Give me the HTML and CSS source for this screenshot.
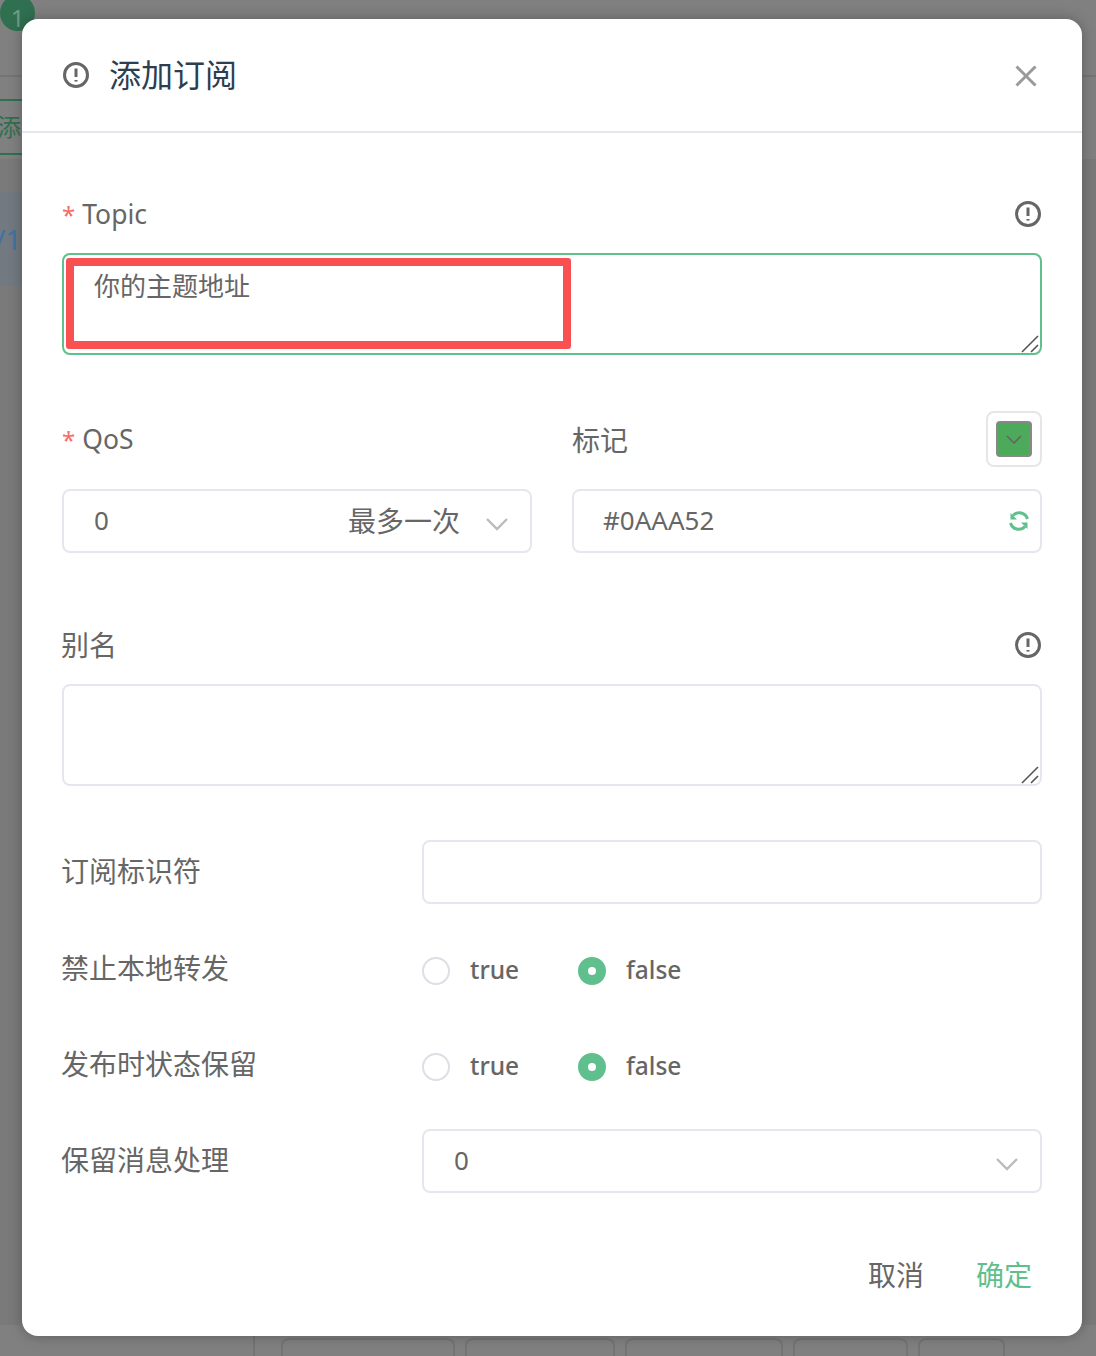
FILE: index.html
```html
<!DOCTYPE html>
<html lang="en">
<head>
    <meta charset="UTF-8">
    <title>添加订阅</title>
    <link rel="stylesheet" href="styles.css">
</head>
<body>
    <div class="page">
        <div class="badge">1</div>
        <div class="topbar"></div>
        <div class="tabrow"><span class="addtag">添加</span></div>
        <div class="tablearea">
            <div class="subrow"><span>/1</span></div>
        </div>
        <div class="pager">
            <div class="pagebox pb1"></div>
            <div class="pagebox pb2"></div>
            <div class="pagebox pb3"></div>
            <div class="pagebox pb4"></div>
            <div class="pagebox pb5"></div>
        </div>
    </div>

    <div class="dialog">
        <div class="dialog-head">
            <svg class="tip" viewBox="0 0 28 28"><circle cx="14" cy="14" r="11.5"/><path d="M14 7.5v8.5"/><path d="M14 19v1.6"/></svg>
            <span class="dialog-title">添加订阅</span>
            <svg class="close" viewBox="0 0 22 22"><path d="M1.5 1.5l19 19M20.5 1.5l-19 19"/></svg>
        </div>

        <form class="dialog-body">
            <div class="labelrow">
                <label class="latin"><i>*</i>Topic</label>
                <svg class="tip" viewBox="0 0 28 28"><circle cx="14" cy="14" r="11.5"/><path d="M14 7.5v8.5"/><path d="M14 19v1.6"/></svg>
            </div>
            <div class="areawrap">
                <textarea class="area focused">你的主题地址</textarea>
                <svg class="grip" viewBox="0 0 18 18"><path d="M1 17L17 1M10 17l7-7"/></svg>
                <div class="redmark"></div>
            </div>

            <div class="qos">
                <div>
                    <div class="labelrow tall">
                        <label class="latin"><i>*</i>QoS</label>
                    </div>
                    <div class="box">
                        <span>0</span>
                        <span class="qosname">最多一次</span>
                        <svg class="chev" viewBox="0 0 24 14"><path d="M2 2l10 10L22 2"/></svg>
                    </div>
                </div>
                <div>
                    <div class="labelrow tall">
                        <label>标记</label>
                        <div class="swatch">
                            <div class="swatch-in">
                                <svg viewBox="0 0 16 9"><path d="M1 1l7 7 7-7"/></svg>
                            </div>
                        </div>
                    </div>
                    <div class="box colorbox">
                        <span>#0AAA52</span>
                        <svg class="refresh" viewBox="0 0 22 22"><path d="M5 5.5A8.5 8.5 0 0 1 19.5 9"/><path d="M17 16.5A8.5 8.5 0 0 1 2.5 13"/><path class="head" d="M2.5 3v6.5H9zM19.5 19v-6.5H13z"/></svg>
                    </div>
                </div>
            </div>

            <div class="labelrow alias">
                <label>别名</label>
                <svg class="tip" viewBox="0 0 28 28"><circle cx="14" cy="14" r="11.5"/><path d="M14 7.5v8.5"/><path d="M14 19v1.6"/></svg>
            </div>
            <div class="areawrap">
                <textarea class="area"></textarea>
                <svg class="grip" viewBox="0 0 18 18"><path d="M1 17L17 1M10 17l7-7"/></svg>
            </div>

            <div class="row row-id">
                <label>订阅标识符</label>
                <div class="box"></div>
            </div>
            <div class="row row-nl">
                <label>禁止本地转发</label>
                <div class="radios">
                    <span class="radio"></span><span class="rtext">true</span>
                    <span class="radio on"></span><span class="rtext">false</span>
                </div>
            </div>
            <div class="row row-rap">
                <label>发布时状态保留</label>
                <div class="radios">
                    <span class="radio"></span><span class="rtext">true</span>
                    <span class="radio on"></span><span class="rtext">false</span>
                </div>
            </div>
            <div class="row row-rh">
                <label>保留消息处理</label>
                <div class="box">
                    <span>0</span>
                    <svg class="chev" viewBox="0 0 24 14"><path d="M2 2l10 10L22 2"/></svg>
                </div>
            </div>

            <div class="foot">
                <span class="cancel">取消</span>
                <span class="ok">确定</span>
            </div>
        </form>
    </div>
</body>
</html>
```

FILE: styles.css
```css
html, body {
    margin: 0;
    height: 100%;
    overflow: hidden;
}
body {
    font: 28px "Noto Sans", "Noto Sans CJK SC", sans-serif;
    color: #666;
    background: #808080;
}
svg {
    display: block;
    fill: none;
}

/* page behind the mask */
.page {
    height: 1356px;
    overflow: hidden;
    position: relative;
}
.badge {
    position: absolute;
    left: 0;
    top: -5px;
    width: 35px;
    height: 36px;
    border-radius: 50%;
    background: #2f7050;
    color: #6f9c86;
    font-size: 24px;
    line-height: 46px;
    text-align: center;
}
.topbar {
    height: 75px;
    border-bottom: 2px solid #757579;
}
.tabrow {
    margin-top: 22px;
    height: 52px;
    border-top: 2px solid #30704f;
    border-bottom: 2px solid #30704f;
    overflow: hidden;
    width: 22px;
}
.addtag {
    display: block;
    width: 60px;
    margin-left: -3px;
    font-size: 24px;
    line-height: 52px;
    color: #30704f;
}
.tablearea {
    margin-top: 4px;
    padding-top: 33px;
    height: 1133px;
    background: #7a7a7a;
}
.subrow {
    height: 93px;
    background: #727980;
    color: #3f74a0;
    font-size: 28px;
    line-height: 94px;
    text-indent: -5px;
    width: 22px;
    overflow: hidden;
}
.pager {
    margin: 11px 0 0 253px;
    height: 20px;
    display: flex;
    border-left: 2px solid #747478;
    padding-left: 26px;
    gap: 10px;
}
.pagebox {
    height: 20px;
    margin-top: 2px;
    box-sizing: border-box;
    border: 2px solid #747478;
    border-bottom: 0;
    border-radius: 8px 8px 0 0;
}
.pb1 { width: 174px; }
.pb2 { width: 150px; }
.pb3 { width: 158px; }
.pb4 { width: 115px; }
.pb5 { width: 87px; }

/* dialog */
.dialog {
    position: absolute;
    left: 22px;
    top: 19px;
    width: 1060px;
    height: 1317px;
    background: #fff;
    border-radius: 16px;
    box-shadow: 0 0 14px rgba(0, 0, 0, .28);
}
.dialog-head {
    height: 114px;
    box-sizing: border-box;
    padding: 0 45px 0 40px;
    display: flex;
    align-items: center;
    border-bottom: 2px solid #e4e7ed;
}
.tip {
    width: 28px;
    height: 28px;
    stroke: #666;
    stroke-width: 3;
}
.dialog-title {
    margin: -4px 0 0 19px;
    font-size: 32px;
    color: #2c3e50;
    flex: 1;
}
.close {
    width: 22px;
    height: 22px;
    margin-top: 2px;
    stroke: #999;
    stroke-width: 3;
}
.dialog-body {
    padding: 61px 40px 0;
}
.labelrow {
    display: flex;
    justify-content: space-between;
    align-items: center;
    height: 40px;
    margin-bottom: 19px;
}
.latin {
    font-size: 26.5px;
}
.labelrow i {
    font-style: normal;
    font-size: 24px;
    color: #f56c6c;
    margin-right: 7px;
}
.tall {
    height: 56px;
    margin-bottom: 22px;
}
.alias {
    margin-top: 72px;
}
.alias label {
    margin: -2px 0 0 -1px;
}
.areawrap {
    position: relative;
    height: 102px;
}
.area {
    display: block;
    width: 100%;
    height: 100%;
    box-sizing: border-box;
    border: 2px solid #e4e7ed;
    border-radius: 8px;
    padding: 11px 30px;
    margin: 0;
    font: 26px/40px "Noto Sans", "Noto Sans CJK SC", sans-serif;
    color: #666;
    resize: none;
    outline: none;
}
.focused {
    border-color: #5fc08e;
}
.grip {
    position: absolute;
    right: 3px;
    bottom: 2px;
    width: 18px;
    height: 18px;
    stroke: #555;
    stroke-width: 1.6;
}
.redmark {
    position: absolute;
    left: 4px;
    top: 5px;
    width: 505px;
    height: 91px;
    box-sizing: border-box;
    border: 8px solid #f95151;
    border-radius: 3px;
}
.qos {
    display: grid;
    grid-template-columns: 470px 470px;
    gap: 40px;
    margin-top: 56px;
}
.box {
    height: 64px;
    box-sizing: border-box;
    border: 2px solid #e4e7ed;
    border-radius: 8px;
    padding: 0 20px 2px 30px;
    display: flex;
    align-items: center;
    font-size: 26px;
}
.box > span:first-child {
    flex: 1;
}
.colorbox {
    padding-left: 29px;
}
.qosname {
    font-size: 28px;
    margin-right: 25px;
}
.chev {
    width: 24px;
    height: 14px;
    margin: 8px 1px 0 0;
    stroke: #bbb;
    stroke-width: 2.4;
}
.refresh {
    width: 22px;
    height: 22px;
    margin: 2px -10px 0 0;
    stroke: #5fc08e;
    stroke-width: 3;
}
.refresh .head {
    fill: #5fc08e;
    stroke: none;
}
.swatch {
    width: 56px;
    height: 56px;
    box-sizing: border-box;
    border: 2px solid #e6e6e6;
    border-radius: 8px;
    padding: 8px;
}
.swatch-in {
    height: 100%;
    box-sizing: border-box;
    background: #4caa5a;
    border: 2px solid #888;
    border-radius: 4px;
    display: flex;
    align-items: center;
    justify-content: center;
}
.swatch-in svg {
    width: 16px;
    height: 9px;
    stroke: #666;
    stroke-width: 1.6;
}
.row {
    display: grid;
    grid-template-columns: 360px 620px;
    align-items: center;
    height: 64px;
}
.row label {
    margin: -4px 0 0 -1px;
}
.row-id { margin-top: 54px; }
.row-nl { margin-top: 35px; }
.row-rap { margin-top: 32px; }
.row-rh { margin-top: 30px; }
.row-nl label,
.row-rap label {
    margin-top: -8px;
}
.radios {
    display: flex;
    align-items: center;
}
.radio {
    width: 28px;
    height: 28px;
    box-sizing: border-box;
    border: 2px solid #dcdfe6;
    border-radius: 50%;
    display: flex;
    align-items: center;
    justify-content: center;
}
.radio.on {
    border-color: #5fc08e;
    background: #5fc08e;
}
.radio.on::after {
    content: "";
    width: 8px;
    height: 8px;
    border-radius: 50%;
    background: #fff;
}
.rtext {
    margin: -3px 0 0 20px;
    width: 108px;
    font-size: 24.5px;
    font-weight: 500;
}
.foot {
    display: flex;
    justify-content: flex-end;
    gap: 52px;
    margin-top: 62px;
    padding-right: 10px;
    line-height: 40px;
}
.ok {
    color: #5fc08e;
}
```
